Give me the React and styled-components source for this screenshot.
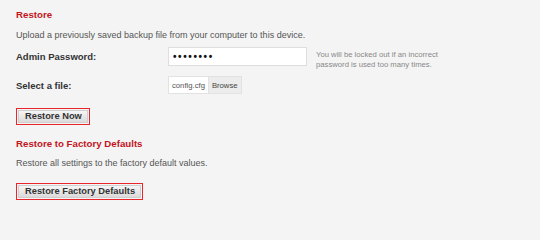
import React from 'react';
import styled, { createGlobalStyle } from 'styled-components';

const GlobalStyle = createGlobalStyle`
	html, body {
		margin: 0;
		padding: 0;
		background: #f4f4f4;
	}
	body {
		font-family: 'Liberation Sans', Arial, sans-serif;
	}
`;

const Page = styled.div`
	width: 540px;
	height: 212px;
	padding: 0 16px;
	box-sizing: border-box;
	background: #f4f4f4;
	overflow: hidden;
`;

const Section = styled.section`
	display: flex;
	flex-direction: column;
	align-items: flex-start;
`;

const Title = styled.h2`
	margin: ${(p) => p.$top}px 0 0;
	font-size: 9.7px;
	line-height: 12px;
	font-weight: bold;
	color: #c3141d;
`;

const Description = styled.p`
	margin: ${(p) => p.$top}px 0 0;
	font-size: 9px;
	line-height: 12px;
	color: #555;
`;

const Form = styled.form`
	display: grid;
	grid-template-columns: 152px 139px auto;
	grid-template-rows: 19px 18px;
	row-gap: 10px;
	margin-top: 6px;
`;

const Label = styled.label`
	display: flex;
	align-items: center;
	font-size: 9.5px;
	font-weight: bold;
	color: #333;
`;

const PasswordInput = styled.input`
	box-sizing: border-box;
	width: 139px;
	height: 19px;
	margin: 0;
	padding: 0 4px;
	border: 1px solid #dedede;
	background: #fff;
	font-family: 'Liberation Sans', Arial, sans-serif;
	font-size: 10px;
	font-weight: bold;
	letter-spacing: 1.6px;
	color: #111;
	outline: none;
`;

const Hint = styled.p`
	align-self: start;
	width: 132px;
	margin: 3px 0 0 9px;
	font-size: 7.7px;
	line-height: 10px;
	color: #888;
`;

const FilePicker = styled.div`
	display: flex;
	height: 18px;
	box-sizing: border-box;
	border: 1px solid #e2e2e2;
	font-size: 7.7px;
	color: #555;
	justify-self: start;
`;

const FileName = styled.span`
	display: flex;
	align-items: center;
	padding: 0 3px;
	background: #fff;
`;

const BrowseButton = styled.span`
	display: flex;
	align-items: center;
	padding: 0 3px;
	background: #ececec;
	border-left: 1px solid #e2e2e2;
	color: #444;
`;

const ActionButton = styled.button`
	box-sizing: border-box;
	height: 17px;
	margin: ${(p) => p.$top}px 0 0;
	padding: 0 7px 0 8px;
	border: 1px solid #e8262b;
	box-shadow: inset 0 0 0 1px #f4f4f4, inset 0 0 0 2px #cfcfcf;
	background: linear-gradient(#fbfbfb, #e6e6e6 55%, #d6d6d6);
	font-family: 'Liberation Sans', Arial, sans-serif;
	font-size: 9.3px;
	font-weight: bold;
	color: #333;
	line-height: 15px;
	cursor: pointer;
`;

export default function App() {
	return (
		<>
			<GlobalStyle />
			<Page>
				<Section>
					<Title $top={9}>Restore</Title>
					<Description $top={8}>
						Upload a previously saved backup file from your computer to this device.
					</Description>
					<Form onSubmit={(e) => e.preventDefault()}>
						<Label htmlFor="admin-password">Admin Password:</Label>
						<PasswordInput
							id="admin-password"
							type="password"
							defaultValue="password"
							readOnly
						/>
						<Hint>You will be locked out if an incorrect password is used too many times.</Hint>
						<Label>Select a file:</Label>
						<FilePicker>
							<FileName>config.cfg</FileName>
							<BrowseButton>Browse</BrowseButton>
						</FilePicker>
					</Form>
					<ActionButton $top={14}>Restore Now</ActionButton>
				</Section>
				<Section>
					<Title $top={13}>Restore to Factory Defaults</Title>
					<Description $top={7}>Restore all settings to the factory default values.</Description>
					<ActionButton $top={14}>Restore Factory Defaults</ActionButton>
				</Section>
			</Page>
		</>
	);
}
